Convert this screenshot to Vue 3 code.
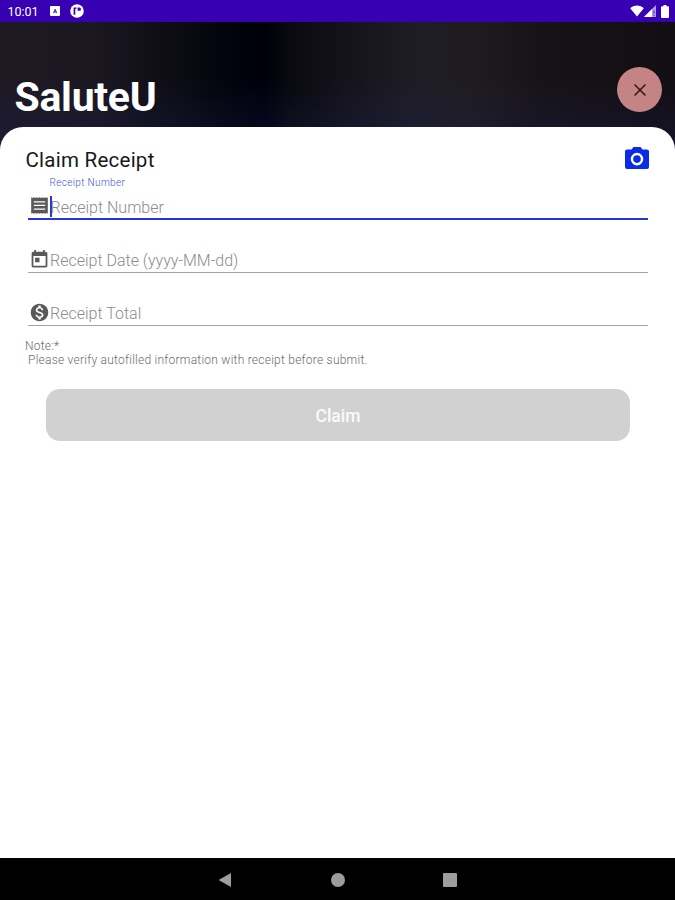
<script setup>
const fields = [
  { id: 'number', label: 'Receipt Number', icon: 'receipt', active: true },
  { id: 'date', label: 'Receipt Date (yyyy-MM-dd)', icon: 'calendar', active: false },
  { id: 'total', label: 'Receipt Total', icon: 'dollar', active: false },
]
const icons = {
  receipt: 'M2.500 2.500l1.600 1 1.600-1 1.600 1 1.600-1 1.600 1 1.500-1 1.600 1 1.600-1 1.600 1 1.600-1 1.600 1 1.500-1v19l-1.500-1-1.600 1-1.600-1-1.600 1-1.600-1-1.600 1-1.500-1-1.600 1-1.600-1-1.600 1-1.600-1-1.600 1zM5.500 7v1.500h13V7zm0 4.200v1.500h13v-1.500zm0 4.200v1.500h13v-1.500z',
  calendar: 'M19 3h-1V1h-2v2H8V1H6v2H5c-1.110 0-2 .9-2 2v14c0 1.100.89 2 2 2h14c1.100 0 2-.9 2-2V5c0-1.100-.9-2-2-2zm0 16H5V8h14v11zM7 10h5v5H7z',
  dollar: 'M12 2C6.480 2 2 6.480 2 12s4.480 10 10 10 10-4.480 10-10S17.520 2 12 2zm1.410 16.090V20h-2.670v-1.930c-1.710-.36-3.160-1.460-3.270-3.400h1.960c.1 1.050.82 1.870 2.650 1.870 1.960 0 2.400-.98 2.400-1.590 0-.83-.44-1.610-2.670-2.140-2.480-.6-4.180-1.620-4.180-3.670 0-1.720 1.390-2.840 3.110-3.210V4h2.670v1.950c1.860.45 2.790 1.860 2.850 3.390H14.300c-.05-1.110-.64-1.870-2.220-1.870-1.500 0-2.400.68-2.400 1.640 0 .84.65 1.390 2.670 1.910s4.180 1.390 4.180 3.910c-.01 1.830-1.380 2.830-3.120 3.160z',
}
</script>

<template>
  <div class="screen">
    <div class="status">
      <span class="time">10:01</span>
      <svg class="note-a" viewBox="0 0 10 10"><path fill="#fff" d="M1 0h8q1 0 1 1v8q0 1-1 1H1q-1 0-1-1V1q0-1 1-1z" /><path d="M3.500 7 5.200 3.200 6.600 7M4 6h2.200" stroke="#3700b3" stroke-width=".9" fill="none" /></svg>
      <svg class="note-p" viewBox="0 0 14 14"><circle cx="7" cy="7" r="6.800" fill="#fff" /><path d="M3.600 3.600h3v1.200H5.300v6H3.600zM7.600 3.600h1.800q1.600 0 1.600 1.600t-1.600 1.600H7.600z" fill="#3700b3" /></svg>
      <span class="spacer"></span>
      <svg class="wifi" viewBox="0 0 14 12"><path fill="#fff" d="M7 11.500.2 3.200C2.100 1.400 4.400.6 7 .6s4.900.8 6.800 2.600z" /></svg>
      <svg class="signal" viewBox="0 0 12 12"><path fill="#fff" opacity=".6" d="M12 0v12H0z" /><path fill="#fff" d="M8 4v8H0z" /><path stroke="#3700b3" stroke-width=".8" d="M10 5.500v3.200M10 9.800v1.200" /></svg>
      <svg class="battery" viewBox="0 0 8 13"><path fill="#fff" d="M2.500 0h3v1.300H7q1 0 1 1V12q0 1-1 1H1q-1 0-1-1V2.300q0-1 1-1h1.500z" /></svg>
    </div>
    <header class="header">
      <h1>SaluteU</h1>
      <button class="close" aria-label="Close">
        <svg viewBox="0 0 14 14"><path d="M1.500 1.500l11 11M12.500 1.500l-11 11" stroke="#2b1719" stroke-width="1.500" fill="none" /></svg>
      </button>
    </header>
    <main class="card">
      <div class="title-row">
        <h2>Claim Receipt</h2>
        <svg class="camera" viewBox="0 0 24 22"><path fill="#0a2be8" fill-rule="evenodd" d="M8.500 0h7l2 2.500H22q2 0 2 2V20q0 2-2 2H2q-2 0-2-2V4.500q0-2 2-2h4.500zM12 5.800a6.300 6.300 0 1 0 0 12.600 6.300 6.300 0 0 0 0-12.600z" /><circle cx="12" cy="12.100" r="3.800" fill="#0a2be8" /></svg>
      </div>
      <form class="form" @submit.prevent>
        <div v-for="f in fields" :key="f.id" class="field" :class="{ active: f.active }">
          <span v-if="f.active" class="floating">{{ f.label }}</span>
          <div class="line">
            <svg class="icon" viewBox="0 0 24 24"><path :d="icons[f.icon]" fill-rule="evenodd" /></svg>
            <span class="hint">{{ f.label }}</span>
          </div>
        </div>
      </form>
      <div class="note"><p>Note:*</p><p class="second">Please verify autofilled information with receipt before submit.</p></div>
      <button class="claim"><span>Claim</span></button>
    </main>
    <nav class="nav">
      <svg viewBox="0 0 16 16"><path d="M14 1v14L1.500 8z" /></svg>
      <svg viewBox="0 0 16 16"><circle cx="8" cy="8" r="7" /></svg>
      <svg viewBox="0 0 16 16"><rect x="1" y="1" width="14" height="14" rx="1" /></svg>
    </nav>
  </div>
</template>

<style>
body { margin: 0; background: #fff; }
</style>

<style scoped>
* { box-sizing: border-box; }
h1, h2, p { margin: 0; }
svg { display: block; flex: none; }
button { border: 0; padding: 0; font-family: inherit; }
.screen { width: 675px; height: 900px; display: flex; flex-direction: column; overflow: hidden; font-family: Roboto, sans-serif; background: #fff; }
.status { height: 22px; flex: none; display: flex; align-items: center; padding: 0 6px 0 7.500px; background: #3700b3; color: #fff; }
.time { font-size: 12.500px; line-height: 22px; width: 42.500px; padding-top: 1px; white-space: nowrap; }
.note-a { width: 10px; height: 10px; margin-right: 9.500px; }
.note-p { width: 14px; height: 14px; }
.spacer { flex: 1; }
.wifi { width: 14px; height: 12px; }
.signal { width: 12px; height: 12px; margin-right: 5px; }
.battery { width: 8px; height: 13px; }
.header { height: 129px; flex: none; display: flex; justify-content: space-between; align-items: flex-start; padding: 45px 13px 0 14.500px;
  background: linear-gradient(180deg, transparent 45%, rgba(30, 30, 85, .3) 90%), linear-gradient(90deg, #1e1923 0, #1b1822 90px, #0a0a12 190px, #02020c 235px, #00000c 265px, #09090f 290px, #14131a 345px, #1e1d25 415px, #1f1c20 470px, #161316 545px, #120e13 675px); }
h1 { font-size: 41px; line-height: 48px; margin-top: 6px; font-weight: 700; color: #fff; letter-spacing: -.3px; }
.close { width: 45px; height: 45px; border-radius: 50%; background: #c48486; display: grid; place-items: center; }
.close svg { width: 14px; height: 14px; }
.card { flex: 1; margin-top: -24px; background: #fff; border-radius: 23px 23px 0 0; padding: 20px 25px 0; }
.title-row { display: flex; justify-content: space-between; align-items: flex-start; height: 30px; }
h2 { font-size: 20.500px; line-height: 26px; font-weight: 400; color: #181818; letter-spacing: .25px; padding-left: .5px; }
.camera { width: 24px; height: 22px; margin-right: 1px; }
.form { padding: 0 2.500px 0 3px; }
.field { height: 53px; display: flex; flex-direction: column; justify-content: flex-end; border-bottom: 1px solid #a4a4a4; color: #8c8c8c; }
.field.active { height: 43px; border-bottom: 2px solid #2635dc; }
.floating { font-size: 10px; line-height: 12px; height: 12px; padding-left: 21.500px; color: #4854e2; letter-spacing: .35px; font-weight: 300; }
.line { display: flex; align-items: center; height: 25px; padding-left: .5px; }
.active .line { height: 29px; padding-top: 4px; }
.icon { width: 21px; height: 21px; fill: #595959; }
.hint { font-size: 16px; line-height: 20px; font-weight: 300; letter-spacing: 0; padding: 2px 0 0 .5px; }
.active .hint { border-left: 2px solid #2635dc; padding: 3px 0 0; line-height: 18px; margin-top: 1px; text-indent: -1px; }
.note { margin-top: 13px; font-size: 12px; line-height: 14px; color: #6c6c6c; font-weight: 300; letter-spacing: .24px; }
.second { padding-left: 3px; }
.claim { display: block; width: 584px; height: 52px; margin: 22px 0 0 21px; padding-top: 2px; border-radius: 14px; background: #d1d1d1; color: #fafafa; font-size: 17.500px; font-weight: 500; text-align: center; }
.nav { height: 42px; flex: none; background: #000; display: flex; justify-content: center; align-items: center; gap: 96.500px; padding-top: 1px; }
.nav svg { width: 16px; height: 16px; fill: #9d9d9d; }
</style>
